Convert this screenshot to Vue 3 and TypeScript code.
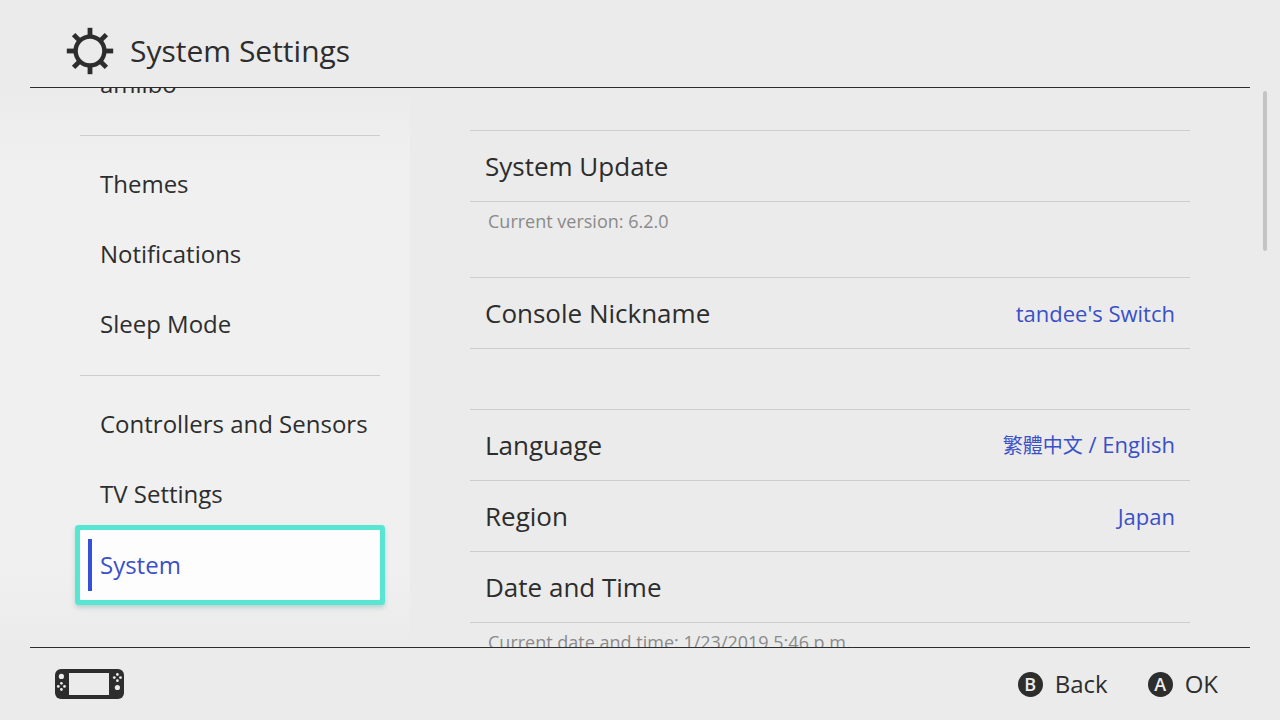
<script setup lang="ts">
import { ref } from 'vue'

interface MenuGroup {
  items: string[]
}

interface SettingRow {
  label: string
  nativeName?: string
  value?: string
  note?: string
}

interface SettingGroup {
  rows: SettingRow[]
}

const menu: MenuGroup[] = [
  { items: ['amiibo'] },
  { items: ['Themes', 'Notifications', 'Sleep Mode'] },
  { items: ['Controllers and Sensors', 'TV Settings', 'System'] },
]

const settings: SettingGroup[] = [
  { rows: [{ label: 'System Update', note: 'Current version: 6.2.0' }] },
  { rows: [{ label: 'Console Nickname', value: "tandee's Switch" }] },
  {
    rows: [
      { label: 'Language', nativeName: '繁體中文', value: ' / English' },
      { label: 'Region', value: 'Japan' },
      { label: 'Date and Time', note: 'Current date and time: 1/23/2019 5:46 p.m.' },
    ],
  },
]

const selected = ref('System')
const teeth = [0, 45, 90, 135, 180, 225, 270, 315]
</script>

<template>
  <div class="screen">
    <header class="header">
      <svg class="gear" viewBox="0 0 48 48" aria-hidden="true">
        <circle cx="24" cy="24" r="14.4" fill="none" stroke="currentColor" stroke-width="4.4" />
        <rect
          v-for="angle in teeth"
          :key="angle"
          x="21.6"
          y="0.8"
          width="4.8"
          height="8.5"
          fill="currentColor"
          :transform="`rotate(${angle} 24 24)`"
        />
      </svg>
      <h1 class="title">System Settings</h1>
    </header>

    <main class="body">
      <nav class="sidebar" aria-label="Settings categories">
        <div class="menu">
          <ul v-for="(group, index) in menu" :key="index" class="menu-group">
            <li v-for="item in group.items" :key="item">
              <button
                type="button"
                class="menu-item"
                :class="{ active: item === selected }"
                :aria-current="item === selected ? 'page' : undefined"
                @click="selected = item"
              >
                {{ item }}
              </button>
            </li>
          </ul>
        </div>
      </nav>

      <section class="content" aria-label="System">
        <div v-for="(group, index) in settings" :key="index" class="setting-group">
          <div v-for="row in group.rows" :key="row.label" class="setting">
            <button type="button" class="row">
              <span class="label">{{ row.label }}</span>
              <span v-if="row.value" class="value"><span v-if="row.nativeName" class="native" lang="zh-Hant">{{ row.nativeName }}</span>{{ row.value }}</span>
            </button>
            <p v-if="row.note" class="note">{{ row.note }}</p>
          </div>
        </div>
      </section>

      <div class="track" aria-hidden="true"><div class="thumb"></div></div>
    </main>

    <footer class="footer">
      <svg class="console" viewBox="0 0 69 30" aria-hidden="true">
        <rect x="0" y="0" width="69" height="30" rx="6" fill="#2d2d2d" />
        <rect x="14" y="4" width="40" height="22" fill="#ebebeb" />
        <g fill="#ebebeb">
          <circle cx="6.4" cy="7.4" r="2.6" />
          <circle cx="6.4" cy="14.3" r="1.4" />
          <circle cx="3.3" cy="17.4" r="1.4" />
          <circle cx="9.5" cy="17.4" r="1.4" />
          <circle cx="6.4" cy="20.5" r="1.4" />
          <circle cx="62.4" cy="5.5" r="1.4" />
          <circle cx="59.3" cy="8.6" r="1.4" />
          <circle cx="65.5" cy="8.6" r="1.4" />
          <circle cx="62.4" cy="11.7" r="1.4" />
          <circle cx="62.4" cy="18.5" r="2.6" />
        </g>
      </svg>
      <div class="hints">
        <button type="button" class="hint"><span class="key">B</span>Back</button>
        <button type="button" class="hint"><span class="key">A</span>OK</button>
      </div>
    </footer>
  </div>
</template>

<style>
body {
  margin: 0;
  background: #ebebeb;
}
</style>

<style scoped>
.screen {
  display: flex;
  flex-direction: column;
  height: 100vh;
  background: #ebebeb;
  color: #2d2d2d;
  font-family: 'Open Sans', 'Noto Sans CJK TC', sans-serif;
  font-weight: 400;
  overflow: hidden;
}

button {
  border: 0;
  margin: 0;
  background: none;
  color: inherit;
  font: inherit;
  text-align: left;
  cursor: pointer;
}

.header {
  display: flex;
  align-items: center;
  gap: 16px;
  margin: 0 30px;
  padding: 15px 36px 0;
  height: 72px;
  border-bottom: 1px solid #2d2d2d;
}

.gear {
  width: 48px;
  height: 48px;
}

.title {
  margin: 0;
  font-size: 30px;
  line-height: 40px;
  font-weight: inherit;
}

.body {
  display: flex;
  flex: 1;
  min-height: 0;
  overflow: hidden;
}

.sidebar {
  flex: 0 0 410px;
  box-sizing: border-box;
  padding: 0 30px 0 80px;
  overflow: hidden;
  background: linear-gradient(#ebebeb, #f0f0f0 80px, #f0f0f0 calc(100% - 80px), #ebebeb);
}

.menu {
  margin-top: -38px;
}

.menu-group {
  margin: 0;
  padding: 0;
  list-style: none;
}

.menu-group + .menu-group {
  margin-top: 15px;
  padding-top: 14px;
  border-top: 1px solid #cdcdcd;
}

.menu-item {
  display: flex;
  align-items: center;
  width: 100%;
  height: 70px;
  padding: 0 20px 2px;
  font-size: 24px;
  line-height: 32px;
  white-space: nowrap;
}

.menu-item.active {
  gap: 8px;
  padding: 0 8px;
  background: #fdfdfd;
  color: #3a50c8;
  border-radius: 1px;
  box-shadow: 0 0 0 5px #58e6d2, 0 3px 4px 5px #2a8a8040;
}

.menu-item.active::before {
  content: '';
  width: 4px;
  height: 52px;
  background: #3450d8;
}

.content {
  flex: 1;
  min-width: 0;
  padding: 42px 0 0 60px;
}

.setting-group {
  border-top: 1px solid #cdcdcd;
}

.setting-group + .setting-group {
  margin-top: 60px;
}

.row {
  display: flex;
  align-items: center;
  justify-content: space-between;
  width: 100%;
  height: 71px;
  padding: 0 15px;
  border-bottom: 1px solid #cdcdcd;
}

.label {
  font-size: 26px;
  line-height: 36px;
}

.value {
  color: #3a50c8;
  font-size: 22px;
  line-height: 30px;
  white-space: pre;
}

.native {
  font-size: 20px;
}

.note {
  margin: 0 0 -16px;
  padding: 7px 18px 0;
  color: #8a8a8a;
  font-size: 18px;
  line-height: 24px;
}

.track {
  flex: 0 0 90px;
  display: flex;
  justify-content: flex-end;
  box-sizing: border-box;
  padding: 3px 13px;
}

.thumb {
  width: 4px;
  height: 29%;
  border-radius: 2px;
  background: #c4c4c4;
}

.footer {
  display: flex;
  align-items: center;
  justify-content: space-between;
  margin: 0 30px;
  padding: 0 32px 0 25px;
  height: 72px;
  border-top: 1px solid #2d2d2d;
}

.console {
  width: 69px;
  height: 30px;
}

.hints {
  display: flex;
  gap: 40px;
}

.hint {
  display: flex;
  align-items: center;
  gap: 12px;
  padding: 0;
  font-size: 24px;
  line-height: 32px;
}

.key {
  width: 25px;
  height: 25px;
  border-radius: 50%;
  background: #2d2d2d;
  color: #ebebeb;
  font-size: 18px;
  line-height: 25px;
  font-weight: 600;
  text-align: center;
}
</style>
